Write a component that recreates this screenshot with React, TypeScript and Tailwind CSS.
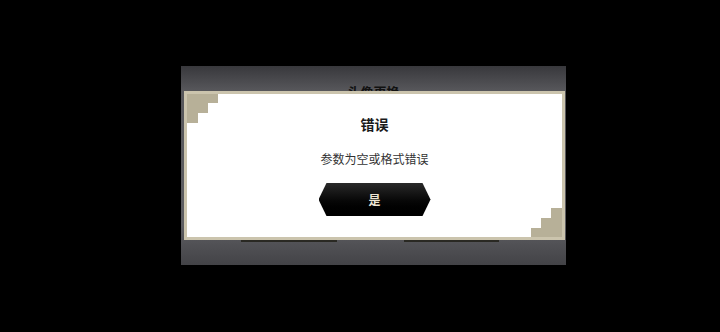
import React from 'react';

const cjk = { fontFamily: '"Noto Sans CJK SC", "Noto Sans", sans-serif' };

const Stairs: React.FC<{ corner: 'tl' | 'br' }> = ({ corner }) => {
  const steps = [
    { w: 'w-[31px]', h: 'h-[9px]' },
    { w: 'w-[21px]', h: 'h-[19px]' },
    { w: 'w-[11px]', h: 'h-[29px]' },
  ];
  return (
    <>
      {steps.map((s, i) => (
        <div
          key={i}
          className={`absolute ${s.w} ${s.h} bg-[#b7b098] ${corner === 'tl' ? 'left-0 top-0' : 'right-0 bottom-0'}`}
        />
      ))}
    </>
  );
};

export default function App() {
  return (
    <div className="w-[720px] h-[332px] bg-black overflow-hidden pt-[66px] pl-[181px]" style={cjk}>
      <div className="relative w-[385px] h-[199px] bg-[linear-gradient(to_bottom,#38383c_0%,#56565a_12%,#5e5e62_80%,#434347_100%)] flex flex-col items-center">
        <div className="pt-[16px] text-[13px] leading-[20px] font-bold text-[#111]">头像更换</div>
        <div className="mt-auto mb-[23px] flex gap-[67px] pr-[7px]">
          <div className="w-[96px] h-[30px] bg-[#2a2923]" />
          <div className="w-[95px] h-[30px] bg-[#2a2923]" />
        </div>

        {/* error dialog */}
        <div className="absolute left-[3px] top-[25px] w-[381px] h-[149px] bg-white border-[3px] border-[#cbc4ad] flex flex-col items-center">
          <Stairs corner="tl" />
          <Stairs corner="br" />
          <div className="mt-[20px] text-[14px] leading-[20px] font-bold text-[#1a1a1a]">错误</div>
          <div className="mt-[15px] text-[12px] leading-[20px] text-[#333]">参数为空或格式错误</div>
          <button
            className="mt-[14px] w-[112px] h-[33px] bg-gradient-to-b from-[#2a2a2a] to-[#000] text-[#ece4d2] text-[12px] font-bold flex items-center justify-center [clip-path:polygon(8px_0,104px_0,112px_50%,104px_100%,8px_100%,0_50%)]"
            style={cjk}
          >
            是
          </button>
        </div>
      </div>
    </div>
  );
}
